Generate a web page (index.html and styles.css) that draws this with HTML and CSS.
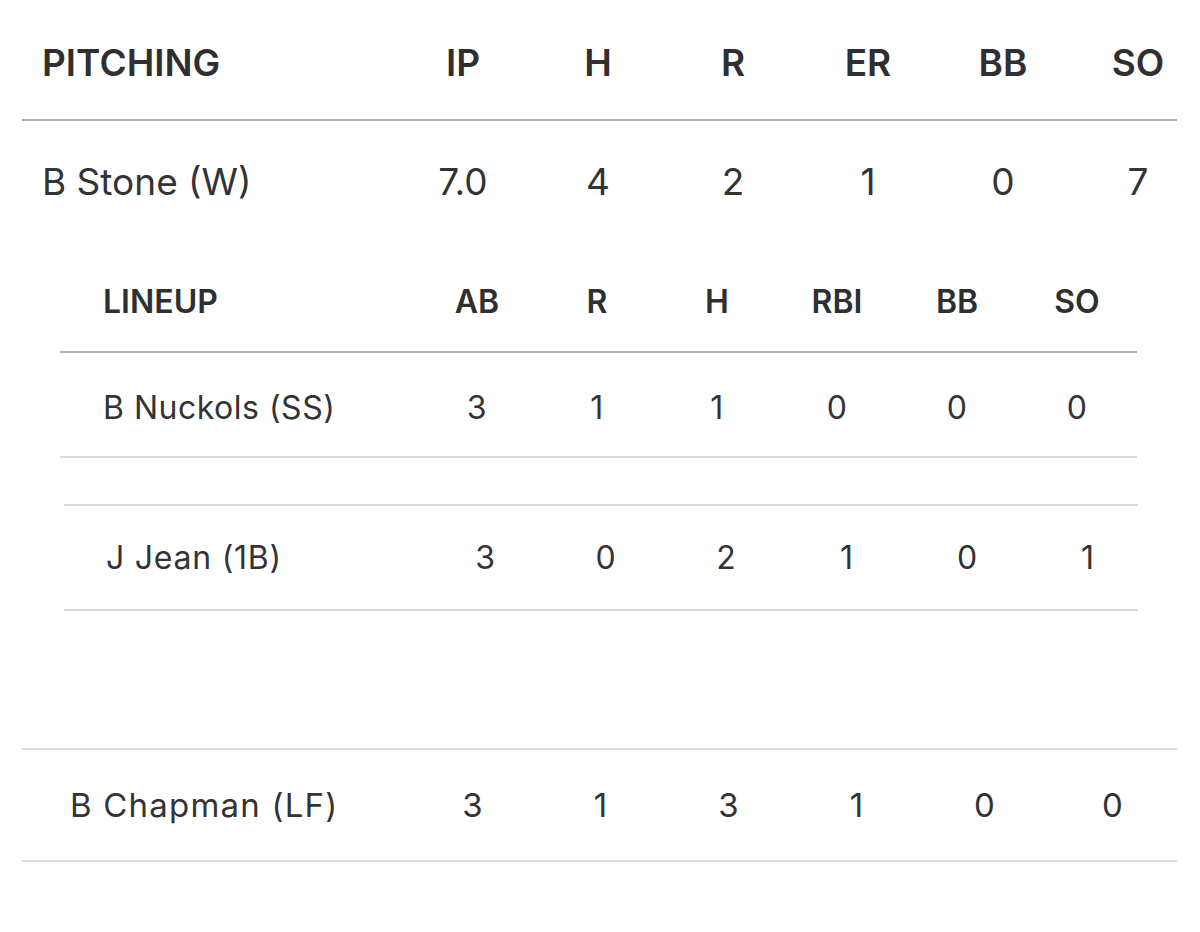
FILE: index.html
```html
<!DOCTYPE html>
<html>
<head>
<meta charset="utf-8">
<link rel="stylesheet" href="styles.css">
</head>
<body>
<div class="sheet">
  <section class="tbl pitching">
    <div class="row head">
      <div class="name">PITCHING</div><div>IP</div><div>H</div><div>R</div><div>ER</div><div>BB</div><div>SO</div>
    </div>
    <div class="row body">
      <div class="name">B Stone (W)</div><div>7.0</div><div>4</div><div>2</div><div>1</div><div>0</div><div>7</div>
    </div>
  </section>

  <section class="tbl lineup">
    <div class="row head">
      <div class="name">LINEUP</div><div>AB</div><div>R</div><div>H</div><div>RBI</div><div>BB</div><div>SO</div>
    </div>
    <div class="row body">
      <div class="name">B Nuckols (SS)</div><div>3</div><div>1</div><div>1</div><div>0</div><div>0</div><div>0</div>
    </div>
  </section>

  <section class="tbl jean">
    <div class="row body">
      <div class="name">J Jean (1B)</div><div>3</div><div>0</div><div>2</div><div>1</div><div>0</div><div>1</div>
    </div>
  </section>

  <section class="tbl chapman">
    <div class="row body">
      <div class="name">B Chapman (LF)</div><div>3</div><div>1</div><div>3</div><div>1</div><div>0</div><div>0</div>
    </div>
  </section>
</div>
</body>
</html>
```

FILE: styles.css
```css
html, body {
  margin: 0;
  padding: 0;
  background: #ffffff;
}

.sheet {
  font-family: Inter, "Liberation Sans", sans-serif;
  color: #333336;
  display: flex;
  flex-direction: column;
}

.row {
  display: grid;
  align-items: center;
  text-align: center;
}

.row .name {
  text-align: left;
  white-space: nowrap;
}

.head {
  font-weight: 600;
  color: #2f2f32;
}

.body {
  font-weight: 400;
}

/* Pitching table */
.pitching {
  margin-left: 22px;
  width: 1155px;
  font-size: 37px;
}
.pitching .row {
  grid-template-columns: 1fr repeat(6, 78px);
  column-gap: 57px;
}
.pitching .name {
  padding-left: 20px;
}
.pitching .head {
  height: 113px;
  padding-top: 6px;
  border-bottom: 2px solid #a9b0b8;
}
.pitching .body {
  height: 120px;
}

/* Lineup table */
.lineup {
  margin-top: 10px;
  margin-left: 60px;
  width: 1077px;
}
.lineup .row {
  grid-template-columns: 1fr repeat(6, 120px);
}
.lineup .name {
  padding-left: 43px;
}
.lineup .head {
  font-size: 32px;
  height: 100px;
  border-bottom: 2px solid #a9b0b8;
}
.lineup .body {
  font-size: 32px;
  height: 98px;
  padding-top: 5px;
  border-bottom: 2px solid #d6dbe0;
  letter-spacing: 0.5px;
}

/* Jean table */
.jean {
  margin-top: 46px;
  margin-left: 64px;
  width: 1074px;
  font-size: 32px;
  border-top: 2px solid #d6dbe0;
  border-bottom: 2px solid #d6dbe0;
}
.jean .row {
  grid-template-columns: 1fr repeat(6, 100px);
  column-gap: 20.5px;
  height: 103px;
  letter-spacing: 0.75px;
}
.jean .name {
  padding-left: 42px;
}

/* Chapman table */
.chapman {
  margin-top: 137px;
  margin-left: 22px;
  width: 1155px;
  font-size: 33px;
  border-top: 2px solid #d6dbe0;
  border-bottom: 2px solid #d6dbe0;
}
.chapman .row {
  grid-template-columns: 1fr repeat(6, 128px);
  height: 110px;
  letter-spacing: 1.2px;
}
.chapman .name {
  padding-left: 48px;
}
```
